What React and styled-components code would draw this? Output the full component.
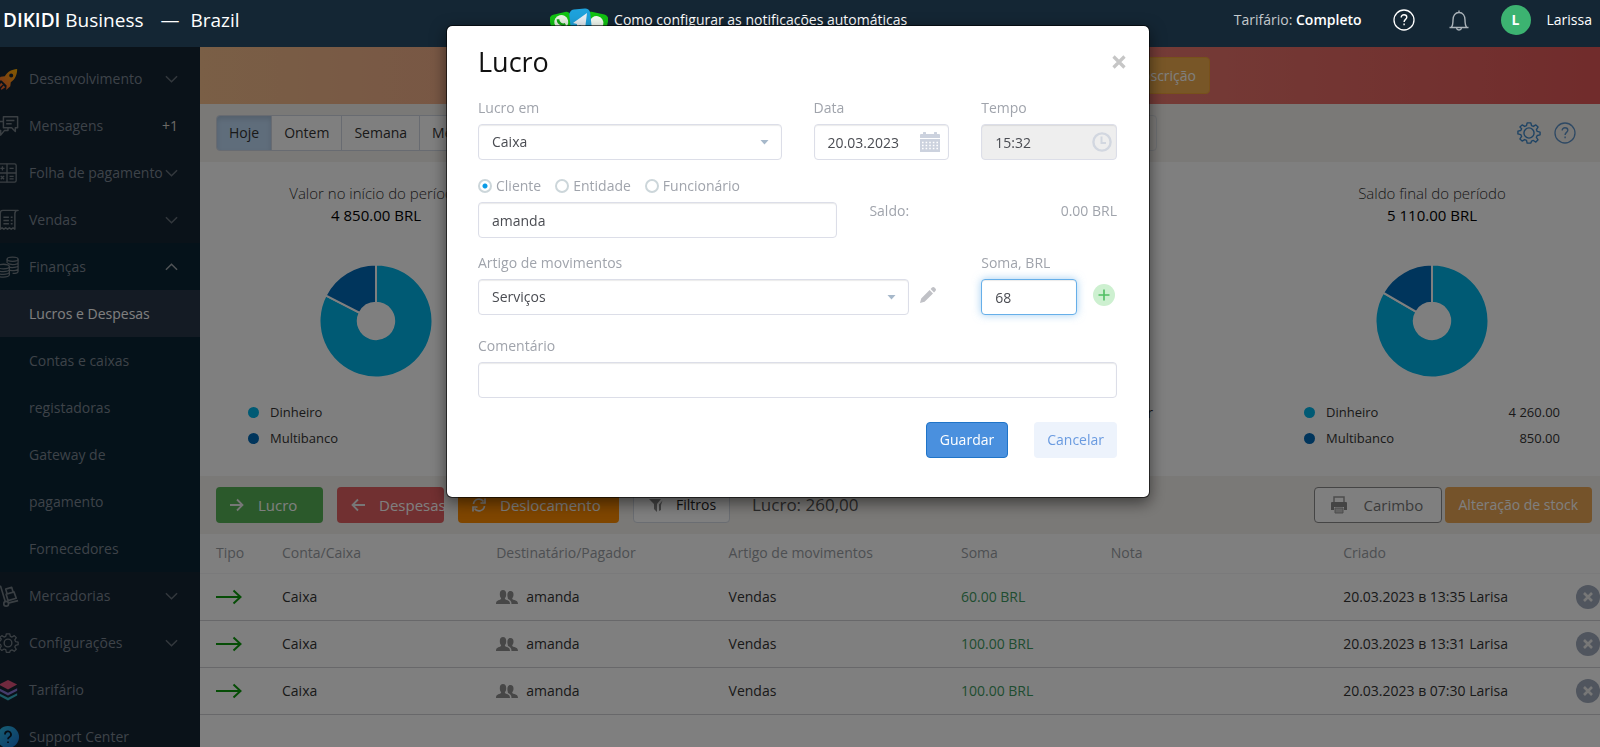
import React from "react";
import styled, { createGlobalStyle } from "styled-components";

const MENU = [
  { label: "Desenvolvimento", icon: "rocket", chevron: true },
  { label: "Mensagens", icon: "chat", badge: "+1" },
  { label: "Folha de pagamento", icon: "calc", chevron: true },
  { label: "Vendas", icon: "receipt", chevron: true },
  {
    label: "Finanças",
    icon: "coins",
    chevron: true,
    children: [
      { label: "Lucros e Despesas", active: true },
      { label: "Contas e caixas registadoras" },
      { label: "Gateway de pagamento" },
      { label: "Fornecedores" },
    ],
  },
  { label: "Mercadorias", icon: "cart", chevron: true },
  { label: "Configurações", icon: "gear", chevron: true },
  { label: "Tarifário", icon: "layers" },
  { label: "Support Center", icon: "support" },
];

const ROWS = [
  { id: 1, sum: "60.00 BRL", created: "20.03.2023 в 13:35 Larisa" },
  { id: 2, sum: "100.00 BRL", created: "20.03.2023 в 13:31 Larisa" },
  { id: 3, sum: "100.00 BRL", created: "20.03.2023 в 07:30 Larisa" },
];

const GEAR =
  "M10 1h4l.7 3.1 2 .8 2.7-1.7 2.4 2.4L20 8.300l.9 2 3.100.700v3l-3.100.700-.9 2 1.800 2.700-2.400 2.400-2.700-1.700-2 .8L14 23h-4l-.7-3.100-2-.8-2.700 1.700-2.400-2.400L4 15.700l-.9-2L0 13v-3l3.100-.700.9-2L2.200 5.600l2.400-2.400 2.700 1.700 2-.8z";

function MenuIcon({ name }) {
  const line = {
    width: 22,
    height: 22,
    viewBox: "0 0 24 24",
    fill: "none",
    stroke: "#747e86",
    strokeWidth: 1.6,
    strokeLinejoin: "round",
    "aria-hidden": true,
  };
  if (name === "rocket") {
    return (
      <svg width="22" height="22" viewBox="0 0 24 24" aria-hidden="true">
        <defs>
          <linearGradient id="rocket" x1="1" y1="0" x2="0" y2="1">
            <stop offset="0" stopColor="#ffb400" />
            <stop offset="0.500" stopColor="#ff8a1e" />
            <stop offset="1" stopColor="#f0503c" />
          </linearGradient>
        </defs>
        <path
          fill="url(#rocket)"
          fillRule="evenodd"
          d="M22 1c-6 .5-10.500 3-13.500 8L4 9.500 0 14l5-.5L10.500 19l-.5 5 4.500-4 .5-4.500C20 12 22 7 22 1zm-6.500 5a2.200 2.200 0 1 1 0 4.400 2.200 2.200 0 0 1 0-4.400zM4.500 16L2 20l1 1 3.500-3zM7 19l-3 4 1 .8L9 21z"
        />
      </svg>
    );
  }
  if (name === "chat") {
    return (
      <svg {...line}>
        <path d="M7 2h15.500v12H20v4l-4-4H7zM10 6h9M10 9.500h6" />
        <path d="M7 7H1v10h3v5l4-5h4v-3" />
      </svg>
    );
  }
  if (name === "calc") {
    return (
      <svg {...line} width="20">
        <rect x="1" y="1" width="22" height="22" rx="2" />
        <path d="M12 1v22M1 12h22M6.500 4v5M4 6.500h5M4.500 15.500l4 4M8.500 15.500l-4 4M15 6.500h5M15 16h5M15 19h5" />
      </svg>
    );
  }
  if (name === "receipt") {
    return (
      <svg {...line}>
        <path d="M23 1.500H6.500C4 1.500 3.500 3 3.500 5v17l2-1.500 2 1.500 2-1.500 2 1.500 2-1.500 2 1.500 2-1.500 2 1.500V5c0-2 1-3.500 3.500-3.500z" />
        <path d="M7 9h6M7 12.500h6M7 16h6M15 9h2M15 12.500h2M15 16h2" />
      </svg>
    );
  }
  if (name === "coins") {
    return (
      <svg {...line} strokeWidth="1.400">
        <ellipse cx="17" cy="3.500" rx="6" ry="2.300" />
        <path d="M11 3.500v4M23 3.500v13c0 1.300-2.500 2.500-6 2.500M11.500 8c1 .7 3 1.300 5.500 1.300 3.500 0 6-1 6-2.300M14 12.500c5 .5 9-.5 9-2M14 15.800c5 .5 9-.5 9-2" />
        <ellipse cx="7" cy="11.500" rx="6.500" ry="2.500" />
        <path d="M.5 11.500v9C.5 22 3.500 23 7 23s6.500-1 6.500-2.500v-9M.5 14.500C.5 16 3.500 17 7 17s6.500-1 6.500-2.500M.5 17.500C.5 19 3.500 20 7 20s6.500-1 6.500-2.500" />
      </svg>
    );
  }
  if (name === "cart") {
    return (
      <svg {...line} strokeWidth="1.800">
        <path d="M0 1.500h4L9 18M13 19.500l10-2.500" />
        <circle cx="10" cy="20.500" r="2.600" />
        <path d="M10 10l8.500-2.500 2.500 7-9 2.500zM11 9.500L9.500 4.500 16 2.500l1.500 5" />
      </svg>
    );
  }
  if (name === "gear") {
    return (
      <svg {...line} strokeWidth="1.500">
        <path d={GEAR} transform="translate(1 1) scale(.92)" />
        <circle cx="12" cy="12" r="4.200" />
      </svg>
    );
  }
  if (name === "layers") {
    return (
      <svg width="22" height="22" viewBox="0 0 24 24" aria-hidden="true">
        <path d="M12 1l10 5-10 5.500L2 6z" fill="#e0527c" />
        <path d="M2 10l10 5 10-5v2.800L12 18 2 12.800z" fill="#8a78d8" />
        <path d="M2 15.500l10 5 10-5V18l-10 5.500L2 18z" fill="#38b4c8" />
      </svg>
    );
  }
  return (
    <svg width="22" height="22" viewBox="0 0 22 22" aria-hidden="true">
      <defs>
        <linearGradient id="support" x1="0" y1="0" x2="1" y2="1">
          <stop offset="0" stopColor="#2fc0e8" />
          <stop offset="1" stopColor="#1873d4" />
        </linearGradient>
      </defs>
      <circle cx="11" cy="11" r="11" fill="url(#support)" />
      <path
        d="M8 8.500a3 3 0 1 1 4.500 2.500c-1 .6-1.500 1-1.500 2.200M11 15.400v1.600"
        fill="none"
        stroke="#0b1c2a"
        strokeWidth="1.800"
      />
    </svg>
  );
}

function Chevron({ up }) {
  return (
    <svg width="13" height="8" viewBox="0 0 14 8" aria-hidden="true">
      <path
        d={up ? "M1 7l6-6 6 6" : "M1 1l6 6 6-6"}
        fill="none"
        stroke={up ? "#a0a6ac" : "#66707a"}
        strokeWidth="1.600"
      />
    </svg>
  );
}

function HelpIcon({ color, size }) {
  return (
    <svg width={size} height={size} viewBox="0 0 22 22" fill="none" aria-hidden="true">
      <circle cx="11" cy="11" r="10" stroke={color} strokeWidth="1.300" />
      <path
        d="M8.200 8.400c0-1.600 1.200-2.700 2.800-2.700s2.800 1.100 2.800 2.600c0 2-2.700 2.200-2.700 4.600M11.100 14.600v1.600"
        stroke={color}
        strokeWidth="1.400"
      />
    </svg>
  );
}

// Donut: the first slice runs clockwise from the top, the second closes the ring
function Donut({ first, second }) {
  const angle = (first / (first + second)) * 2 * Math.PI;
  const point = (r) => `${56 + r * Math.sin(angle)} ${56 - r * Math.cos(angle)}`;
  return (
    <svg width="112" height="112" viewBox="0.500 0.500 111 111" aria-hidden="true">
      <path
        d={`M56 0A56 56 0 1 1 ${point(56)}L${point(18)}A18 18 0 1 0 56 38z`}
        fill="#00b4e8"
        stroke="#fff"
        strokeWidth="2"
      />
      <path
        d={`M${point(56)}A56 56 0 0 1 56 0V38A18 18 0 0 0 ${point(18)}z`}
        fill="#006ab8"
        stroke="#fff"
        strokeWidth="2"
      />
    </svg>
  );
}

function BalancePanel({ title, total, cash, card, showValues }) {
  return (
    <Panel>
      <PanelTitle>{title}</PanelTitle>
      <PanelTotal>{total}</PanelTotal>
      <Donut first={cash.value} second={card.value} />
      <Legend>
        <LegendItem $color="#00b4e8">
          Dinheiro {showValues && <span>{cash.text}</span>}
        </LegendItem>
        <LegendItem $color="#006ab8">
          Multibanco {showValues && <span>{card.text}</span>}
        </LegendItem>
      </Legend>
    </Panel>
  );
}

function Caret() {
  return (
    <svg width="9" height="5" viewBox="0 0 9 5" aria-hidden="true">
      <path d="M.5 0h8l-4 4.500z" fill="#a6b8ca" />
    </svg>
  );
}

function LucroModal() {
  return (
    <ModalLayer>
      <Modal role="dialog" aria-labelledby="modal-title">
        <ModalHeader>
          <h2 id="modal-title">Lucro</h2>
          <CloseButton type="button" aria-label="Fechar">
            <svg width="14" height="14" viewBox="0 0 14 14" aria-hidden="true">
              <path d="M1.500 1.500l11 11M12.500 1.500l-11 11" stroke="#c6c6c6" strokeWidth="3.200" />
            </svg>
          </CloseButton>
        </ModalHeader>
        <form>
          <FormRow>
            <Field $span={6}>
              <label htmlFor="account">Lucro em</label>
              <Control>
                <Select id="account">
                  <option>Caixa</option>
                </Select>
                <Caret />
              </Control>
            </Field>
            <Field $span={3}>
              <label htmlFor="date">Data</label>
              <Control $icon>
                <Input id="date" defaultValue="20.03.2023" />
                <svg width="20" height="20" viewBox="0 0 20 20" aria-hidden="true">
                  <path
                    d="M1 2h2V1a1 1 0 0 1 3 0v1h8V1a1 1 0 0 1 3 0v1h2a1 1 0 0 1 1 1v3H0V3a1 1 0 0 1 1-1zM0 7h20v13H0z"
                    fill="#ccd2de"
                  />
                  <path
                    d="M2 10.500h16M2 13.500h16M2 16.500h16"
                    stroke="#fff"
                    strokeWidth="1.500"
                    strokeDasharray="1.600 2"
                  />
                </svg>
              </Control>
            </Field>
            <Field $span={3}>
              <label htmlFor="time">Tempo</label>
              <Control $icon $right={5}>
                <Input id="time" defaultValue="15:32" disabled />
                <svg width="20" height="20" viewBox="0 0 20 20" fill="none" aria-hidden="true">
                  <circle cx="10" cy="10" r="8.600" stroke="#d2d7e0" strokeWidth="2.400" />
                  <path d="M9.500 4.500v6.500h4.500" stroke="#d2d7e0" strokeWidth="2" />
                </svg>
              </Control>
            </Field>
          </FormRow>

          <FormRow $gap={15}>
            <Field $span={7}>
              <Radios>
                <label>
                  <input type="radio" name="payer" defaultChecked /> Cliente
                </label>
                <label>
                  <input type="radio" name="payer" /> Entidade
                </label>
                <label>
                  <input type="radio" name="payer" /> Funcionário
                </label>
              </Radios>
              <Input aria-label="Cliente" defaultValue="amanda" />
            </Field>
            <Balance>
              <span>Saldo:</span>
              <span>0.00 BRL</span>
            </Balance>
          </FormRow>

          <FormRow $gap={21}>
            <Field $span={9}>
              <label htmlFor="article">Artigo de movimentos</label>
              <Inline>
                <Control>
                  <Select id="article">
                    <option>Serviços</option>
                  </Select>
                  <Caret />
                </Control>
                <IconButton type="button" aria-label="Editar">
                  <svg width="16" height="16" viewBox="0 0 16 16" aria-hidden="true">
                    <path
                      d="M0 16l1.200-4.600L9.600 3l3.400 3.400-8.400 8.400zM10.600 2L12 .6a1.800 1.800 0 0 1 2.500 0l.9.900a1.800 1.800 0 0 1 0 2.500L14 5.400z"
                      fill="#c0c1c6"
                    />
                  </svg>
                </IconButton>
              </Inline>
            </Field>
            <Field $span={3}>
              <label htmlFor="sum">Soma, BRL</label>
              <Inline>
                <Control>
                  <Input id="sum" defaultValue="68" $focused />
                </Control>
                <IconButton type="button" aria-label="Adicionar" $end>
                  <svg width="22" height="22" viewBox="0 0 22 22" aria-hidden="true">
                    <circle cx="11" cy="11" r="11" fill="#cdf0d0" />
                    <path d="M11 5.500v11M5.500 11h11" stroke="#4fbf62" strokeWidth="1.600" />
                  </svg>
                </IconButton>
              </Inline>
            </Field>
          </FormRow>

          <FormRow>
            <Field $span={12}>
              <label htmlFor="comment">Comentário</label>
              <Input id="comment" />
            </Field>
          </FormRow>

          <ModalFooter>
            <SaveButton type="button">Guardar</SaveButton>
            <CancelButton type="button">Cancelar</CancelButton>
          </ModalFooter>
        </form>
      </Modal>
    </ModalLayer>
  );
}

export default function App() {
  return (
    <>
      <GlobalStyle />
      <Header>
        <Brand>
          <b>DIKIDI</b> Business <i>—</i> Brazil
        </Brand>
        <Promo href="#notificacoes">
          <svg width="58" height="26" viewBox="0 0 58 26" aria-hidden="true">
            <g transform="rotate(-14 12 18)">
              <rect x="1" y="6" width="22" height="24" rx="5" fill="#12c312" />
              <circle cx="12" cy="15" r="7" fill="#e8f4e4" />
              <path
                d="M9.500 11.500c-1 3.500 2.500 7.500 6 6.500"
                fill="none"
                stroke="#12a812"
                strokeWidth="2.600"
              />
            </g>
            <g transform="rotate(12 46 18)">
              <rect x="34" y="6" width="23" height="24" rx="5" fill="#12c312" />
              <circle cx="46" cy="16" r="7" fill="#f4fbf2" />
            </g>
            <rect x="20" y="2" width="21" height="24" rx="5" fill="#1ea2dc" transform="rotate(-6 30 14)" />
            <path d="M23 16L37 6l-2 16-5-4-3 3v-4z" fill="#e6eef4" />
          </svg>
          Como configurar as notificações automáticas
        </Promo>
        <UserArea>
          <Plan>
            Tarifário: <b>Completo</b>
          </Plan>
          <HelpIcon color="#fff" size={22} />
          <svg width="22" height="22" viewBox="0 0 22 22" fill="none" aria-hidden="true">
            <path
              d="M1.500 18.500h19M3.500 18c1.400-1.800 1.500-3.600 1.500-7 0-4.200 2.200-7.500 6-7.500s6 3.300 6 7.500c0 3.400.1 5.200 1.500 7M11 3.500V1.500M8.500 19c.4 2.600 4.600 2.600 5 0"
              stroke="#aab2b8"
              strokeWidth="1.400"
            />
          </svg>
          <Avatar>L</Avatar>
          <UserName>Larissa</UserName>
        </UserArea>
      </Header>

      <Layout>
        <Sidebar>
          {MENU.map((item) => (
            <MenuGroup key={item.label} $open={!!item.children}>
              <MenuItem href="#">
                <IconSlot>
                  <MenuIcon name={item.icon} />
                </IconSlot>
                <span>{item.label}</span>
                {item.badge && <em>{item.badge}</em>}
                {item.chevron && <Chevron up={!!item.children} />}
              </MenuItem>
              {item.children &&
                item.children.map((sub) => (
                  <SubItem key={sub.label} href="#" $active={sub.active}>
                    {sub.label}
                  </SubItem>
                ))}
            </MenuGroup>
          ))}
        </Sidebar>

        <Main>
          <Banner>
            <BannerBody>
              <BannerButton type="button">Subscrição</BannerButton>
            </BannerBody>
          </Banner>

          <Toolbar>
            <Period>
              <PeriodGroup>
                <PeriodButton type="button" $active>Hoje</PeriodButton>
                <PeriodButton type="button">Ontem</PeriodButton>
                <PeriodButton type="button">Semana</PeriodButton>
                <PeriodButton type="button">Mês</PeriodButton>
              </PeriodGroup>
              <PeriodInput aria-label="Período" />
            </Period>
            <ToolIcons>
              <svg width="24" height="24" viewBox="-1 -1 26 26" fill="none" aria-hidden="true">
                <path d={GEAR} stroke="#3c87c8" strokeWidth="1.500" strokeLinejoin="round" />
                <circle cx="12" cy="12" r="5.500" stroke="#3c87c8" strokeWidth="1.500" />
              </svg>
              <HelpIcon color="#5c92c8" size={22} />
            </ToolIcons>
          </Toolbar>

          <Panels>
            <BalancePanel
              title="Valor no início do período"
              total="4 850.00 BRL"
              cash={{ value: 4000, text: "4 000.00" }}
              card={{ value: 850, text: "850.00" }}
            />
            <Turnover>
              <span>r</span>
            </Turnover>
            <BalancePanel
              title="Saldo final do período"
              total="5 110.00 BRL"
              cash={{ value: 4260, text: "4 260.00" }}
              card={{ value: 850, text: "850.00" }}
              showValues
            />
          </Panels>

          <Actions>
            <ActionButton type="button" $bg="#56b356">
              <svg width="14" height="14" viewBox="0 0 14 14" fill="none" aria-hidden="true">
                <path d="M0 7h12.500M7 1.500L12.500 7 7 12.500" stroke="#eee" strokeWidth="1.800" />
              </svg>
              Lucro
            </ActionButton>
            <ActionButton type="button" $bg="#e36062">
              <svg width="14" height="14" viewBox="0 0 14 14" fill="none" aria-hidden="true">
                <path d="M14 7H1.500M7 1.500L1.500 7 7 12.500" stroke="#eee" strokeWidth="1.800" />
              </svg>
              Despesas
            </ActionButton>
            <ActionButton type="button" $bg="#ff8c00" $wide>
              <svg width="14" height="14" viewBox="0 0 14 14" fill="none" aria-hidden="true">
                <path
                  d="M1.500 6A5.500 5.500 0 0 1 11.500 3.500M12.500 8a5.500 5.500 0 0 1-10 2.500M13 .5V5H8.500M1 13.500V9h4.500"
                  stroke="#eee"
                  strokeWidth="1.700"
                />
              </svg>
              Deslocamento
            </ActionButton>
            <FilterButton type="button">
              <svg width="14" height="14" viewBox="0 0 14 14" aria-hidden="true">
                <path d="M0 1h12L8 6v8l-3-3V6zM13.500 2.500L10 6.500V13l2-1V7z" fill="#888" />
              </svg>
              Filtros
            </FilterButton>
            <Profit>Lucro: 260,00</Profit>
            <PrintButton type="button">
              <svg width="16" height="18" viewBox="0 0 16 18" aria-hidden="true">
                <path d="M3 7V1h10v6" fill="none" stroke="#999" strokeWidth="1.500" />
                <path d="M0 7a1 1 0 0 1 1-1h14a1 1 0 0 1 1 1v7h-3v-3H3v3H0z" fill="#888" />
                <path d="M4 12h8v5H4z" fill="#c4c4c4" stroke="#999" />
              </svg>
              Carimbo
            </PrintButton>
            <StockButton type="button">Alteração de stock</StockButton>
          </Actions>

          <Table>
            <colgroup>
              <col width="66" />
              <col width="15.3%" />
              <col width="16.6%" />
              <col width="16.6%" />
              <col width="10.7%" />
              <col width="16.6%" />
              <col />
              <col width="36" />
            </colgroup>
            <thead>
              <tr>
                <th>Tipo</th>
                <th>Conta/Caixa</th>
                <th>Destinatário/Pagador</th>
                <th>Artigo de movimentos</th>
                <th>Soma</th>
                <th>Nota</th>
                <th>Criado</th>
                <th aria-label="Apagar" />
              </tr>
            </thead>
            <tbody>
              {ROWS.map((row) => (
                <tr key={row.id}>
                  <td>
                    <svg width="26" height="16" viewBox="0 0 26 16" fill="none" aria-hidden="true">
                      <path d="M0 8h24M17.500 1.500L24.500 8l-7 6.500" stroke="#0c9a0c" strokeWidth="2" />
                    </svg>
                  </td>
                  <td>Caixa</td>
                  <td>
                    <Payer>
                      <svg width="22" height="14" viewBox="0 0 22 14" fill="#8e8e8e" aria-hidden="true">
                        <path d="M0 14c0-3 1.500-3.500 4-4.300 1-.4 1.300-1 1-1.700C4 7 3.800 5.500 3.800 4 3.800 1.500 5 0 7 0s3.200 1.500 3.200 4c0 1.500-.2 3-1.200 4-.3.700 0 1.300 1 1.700 2.500.8 4 1.300 4 4.300z" />
                        <path d="M11.500 6.500C11 3.500 12 1 14.500 1c2 0 3 1.400 3 3.600 0 1.500-.3 2.700-1.200 3.600-.3.700 0 1.100 1 1.500 2.700.8 4.700 1.300 4.700 4.300h-6.500c0-3-1.500-4-3.500-5z" />
                      </svg>
                      amanda
                    </Payer>
                  </td>
                  <td>Vendas</td>
                  <td>
                    <Sum>{row.sum}</Sum>
                  </td>
                  <td />
                  <td>{row.created}</td>
                  <td>
                    <DeleteButton type="button" aria-label="Apagar">
                      <svg width="10" height="10" viewBox="0 0 10 10" aria-hidden="true">
                        <path d="M1 1l8 8M9 1l-8 8" stroke="#eee" strokeWidth="2.600" />
                      </svg>
                    </DeleteButton>
                  </td>
                </tr>
              ))}
            </tbody>
          </Table>
        </Main>
      </Layout>

      <Backdrop />
      <LucroModal />
    </>
  );
}

const GlobalStyle = createGlobalStyle`
  * {
    box-sizing: border-box;
  }
  body {
    margin: 0;
    overflow: hidden;
    background: #fff;
    color: #333;
    font: 14px/20px "Open Sans", "Noto Sans", sans-serif;
  }
  button, input, select {
    font: inherit;
  }
  button {
    cursor: pointer;
  }
  a {
    color: inherit;
    text-decoration: none;
  }
  svg {
    flex: none;
    display: block;
  }
`;

const Header = styled.header`
  height: 47px;
  padding: 0 8px 8px 3px;
  background: #142634;
  color: #fff;
  display: flex;
  align-items: center;
  justify-content: space-between;
`;

const Brand = styled.div`
  font-size: 19px;
  white-space: nowrap;
  b {
    font-weight: 600;
  }
  i {
    font-style: normal;
    margin: 0 6px 0 12px;
  }
`;

const Promo = styled.a`
  display: flex;
  align-items: center;
  gap: 6px;
  padding-right: 16px;
  font-weight: 500;
`;

const UserArea = styled.div`
  display: flex;
  align-items: center;
`;

const Plan = styled.div`
  color: #c4c9cd;
  margin-right: 31px;
  b {
    font-weight: 600;
    color: #fff;
  }
  & + svg {
    margin-right: 33px;
  }
`;

const Avatar = styled.div`
  width: 30px;
  height: 30px;
  margin: 0 16px 0 31px;
  border-radius: 50%;
  background: #3cb371;
  font-weight: 700;
  line-height: 30px;
  text-align: center;
`;

const UserName = styled.div`
  font-weight: 500;
`;

const Layout = styled.div`
  display: flex;
  height: calc(100vh - 47px);
`;

const Sidebar = styled.nav`
  flex: none;
  width: 200px;
  padding-top: 8px;
  overflow: hidden;
  background: #142432;
  color: #7c8692;
`;

const MenuGroup = styled.div`
  background: ${(p) => (p.$open ? "#0a2434" : "transparent")};
`;

const MenuItem = styled.a`
  display: flex;
  align-items: center;
  height: 47px;
  padding-right: 22px;
  white-space: nowrap;
  em,
  > svg {
    margin-left: auto;
  }
  em {
    font-style: normal;
    color: #d8d4cc;
  }
`;

const IconSlot = styled.div`
  flex: none;
  width: 32px;
  margin-left: -3px;
`;

const SubItem = styled.a`
  display: block;
  padding: 0 40px 0 29px;
  line-height: 47px;
  background: ${(p) => (p.$active ? "#283648" : "transparent")};
  color: ${(p) => (p.$active ? "#fff" : "inherit")};
`;

const Main = styled.main`
  flex: 1;
  min-width: 0;
`;

const Banner = styled.div`
  height: 57px;
  background: linear-gradient(90deg, #f4be8c, #f0a888 25%, #ea7a70 65%, #e25858);
  display: flex;
  align-items: center;
  justify-content: center;
`;

const BannerBody = styled.div`
  width: 620px;
  display: flex;
  justify-content: flex-end;
`;

const BannerButton = styled.button`
  height: 37px;
  padding: 0 13px;
  border: 1px solid #eea236;
  border-radius: 4px;
  background: #f0ad4e;
  color: #fff;
`;

const Toolbar = styled.div`
  height: 58px;
  padding: 0 24px 0 16px;
  background: #f5f2ee;
  display: flex;
  align-items: center;
  justify-content: space-between;
`;

const Period = styled.div`
  flex: 0 1 941px;
  display: flex;
  gap: 16px;
`;

const PeriodGroup = styled.div`
  display: flex;
`;

const PeriodButton = styled.button`
  height: 36px;
  padding: 0 12px;
  margin-right: -1px;
  border: 1px solid #d0d7e2;
  background: ${(p) => (p.$active ? "#bfdaf6" : "#fff")};
  box-shadow: ${(p) => (p.$active ? "inset 0 3px 5px rgba(0, 0, 0, 0.12)" : "none")};
  color: #333;
  &:first-child {
    border-radius: 4px 0 0 4px;
  }
  &:last-child {
    border-radius: 0 4px 4px 0;
  }
`;

const PeriodInput = styled.input`
  flex: 1;
  min-width: 0;
  height: 36px;
  border: 1px solid #dcdfe4;
  border-radius: 4px;
  background: #f5f2ee;
`;

const ToolIcons = styled.div`
  display: flex;
  align-items: center;
  gap: 13px;
`;

const Panels = styled.div`
  display: grid;
  grid-template-columns: repeat(4, 1fr);
  gap: 32px;
  padding: 20px 8px 25px 16px;
`;

const Panel = styled.section`
  display: flex;
  flex-direction: column;
  align-items: center;
  > svg {
    margin: 39px 0 22px;
  }
`;

const PanelTitle = styled.div`
  font-size: 15px;
  font-weight: 300;
  line-height: 22px;
`;

const PanelTotal = styled.div`
  font-size: 15px;
  line-height: 22px;
  color: #000;
`;

const Legend = styled.ul`
  list-style: none;
  width: 80%;
  margin: 0;
  padding: 0;
  font-size: 13px;
`;

const LegendItem = styled.li`
  display: flex;
  align-items: center;
  height: 26px;
  &::before {
    content: "";
    width: 11px;
    height: 11px;
    margin-right: 11px;
    border-radius: 50%;
    background: ${(p) => p.$color};
  }
  span {
    margin-left: auto;
  }
`;

const Turnover = styled.section`
  grid-column: span 2;
  display: flex;
  justify-content: flex-end;
  align-items: flex-end;
  padding: 0 87px 28px 0;
`;

const Actions = styled.div`
  height: 58px;
  padding: 0 8px 0 16px;
  background: #f5f2ee;
  display: flex;
  align-items: center;
`;

const ActionButton = styled.button`
  flex: none;
  width: ${(p) => (p.$wide ? 161 : 107)}px;
  height: 36px;
  margin-right: 14px;
  padding: 0 0 0 14px;
  border: 0;
  border-radius: 4px;
  background: ${(p) => p.$bg};
  color: #fff;
  font-size: 15px;
  display: flex;
  align-items: center;
  gap: 14px;
`;

const FilterButton = styled(ActionButton)`
  width: 97px;
  padding-left: 15px;
  gap: 13px;
  border: 1px solid #d4dae4;
  background: #fff;
  color: #222;
  font-size: 14px;
`;

const Profit = styled.div`
  margin-left: 8px;
  font-size: 17px;
  color: #555;
`;

const PrintButton = styled(ActionButton)`
  width: 128px;
  margin: 0 3px 0 auto;
  padding-left: 16px;
  gap: 17px;
  border: 1px solid #8a8a8a;
  background: #fff;
  color: #777;
`;

const StockButton = styled.button`
  height: 36px;
  padding: 0 14px;
  border: 0;
  border-radius: 4px;
  background: #eba654;
  color: #fff;
`;

const Table = styled.table`
  width: 100%;
  table-layout: fixed;
  border-collapse: collapse;
  th,
  td {
    padding: 0 0 0 16px;
    text-align: left;
    white-space: nowrap;
  }
  th {
    height: 39px;
    font-weight: 400;
    color: #9a9ea4;
  }
  td {
    height: 47px;
    border-bottom: 1px solid #d0d0d4;
  }
  td:last-child {
    padding-left: 12px;
  }
  thead tr {
    border-bottom: 1px solid #f4f4f6;
  }
`;

const Payer = styled.div`
  display: flex;
  align-items: center;
  gap: 8px;
`;

const Sum = styled.span`
  color: #3f9a62;
`;

const DeleteButton = styled.button`
  display: flex;
  align-items: center;
  justify-content: center;
  width: 24px;
  height: 24px;
  padding: 0;
  border: 0;
  border-radius: 50%;
  background: #a0aabc;
`;

const Backdrop = styled.div`
  position: fixed;
  inset: 47px 0 0;
  background: rgba(0, 0, 0, 0.5);
`;

const ModalLayer = styled.div`
  position: fixed;
  inset: 0;
  padding: 25px 4px 0 0;
  display: flex;
  justify-content: center;
  align-items: flex-start;
`;

const Modal = styled.div`
  width: 704px;
  padding: 21px 32px 39px 31px;
  border: 1px solid rgba(0, 0, 0, 0.6);
  border-radius: 6px;
  background: #fff;
  background-clip: padding-box;
  box-shadow: 0 5px 15px rgba(0, 0, 0, 0.5);
`;

const ModalHeader = styled.div`
  display: flex;
  justify-content: space-between;
  align-items: center;
  margin-bottom: 21px;
  h2 {
    margin: 0;
    font-size: 27px;
    font-weight: 400;
    line-height: 30px;
    color: #111;
  }
`;

const CloseButton = styled.button`
  padding: 0;
  margin-right: -9px;
  border: 0;
  background: none;
`;

const FormRow = styled.div`
  display: grid;
  grid-template-columns: repeat(12, 1fr);
  column-gap: 32px;
  margin-bottom: ${(p) => p.$gap || 16}px;
  color: #a0a4ac;
`;

const Field = styled.div`
  grid-column: span ${(p) => p.$span};
  > label {
    display: block;
    margin-bottom: 6px;
  }
`;

const Control = styled.div`
  position: relative;
  flex: 1;
  > svg {
    position: absolute;
    top: ${(p) => (p.$icon ? 8 : 16)}px;
    right: ${(p) => p.$right || (p.$icon ? 9 : 13)}px;
    pointer-events: none;
  }
`;

const Input = styled.input`
  width: 100%;
  height: 36px;
  display: block;
  padding: 0 13px;
  border: 1px solid ${(p) => (p.$focused ? "#66afe9" : "#dcdee8")};
  border-radius: 4px;
  outline: 0;
  background: #fff;
  color: #4a4c52;
  box-shadow: ${(p) =>
    p.$focused
      ? "inset 0 1px 1px rgba(0, 0, 0, 0.08), 0 0 8px rgba(102, 175, 233, 0.6)"
      : "inset 0 1px 1px rgba(0, 0, 0, 0.08)"};
  &:disabled {
    background: #eee;
  }
`;

const Select = styled(Input).attrs({ as: "select" })`
  appearance: none;
`;

const Radios = styled.div`
  display: flex;
  gap: 14px;
  margin-bottom: 6px;
  label {
    display: flex;
    align-items: center;
    gap: 4px;
  }
  input {
    appearance: none;
    width: 14px;
    height: 14px;
    margin: 0;
    border: 2px solid #ccd6da;
    border-radius: 50%;
  }
  input:checked {
    background: radial-gradient(circle, #0a9be6 2px, #fff 3px);
  }
`;

const Balance = styled.div`
  grid-column: span 5;
  display: flex;
  justify-content: space-between;
  padding-top: 25px;
`;

const Inline = styled.div`
  display: flex;
  align-items: flex-start;
`;

const IconButton = styled.button`
  flex: none;
  width: 40px;
  height: 32px;
  padding: ${(p) => (p.$end ? "0 2px 0 0" : "0 2px 0 0")};
  border: 0;
  background: none;
  display: flex;
  align-items: center;
  justify-content: ${(p) => (p.$end ? "flex-end" : "center")};
`;

const ModalFooter = styled.div`
  display: flex;
  justify-content: flex-end;
  gap: 26px;
  margin-top: 24px;
`;

const SaveButton = styled.button`
  height: 36px;
  padding: 0 13px;
  border: 1px solid #1f74c8;
  border-radius: 4px;
  background: #4a90de;
  color: #fff;
  font-weight: 500;
`;

const CancelButton = styled.button`
  height: 36px;
  padding: 0 13px;
  border: 0;
  border-radius: 4px;
  background: #edf3fc;
  color: #6a9be0;
`;
